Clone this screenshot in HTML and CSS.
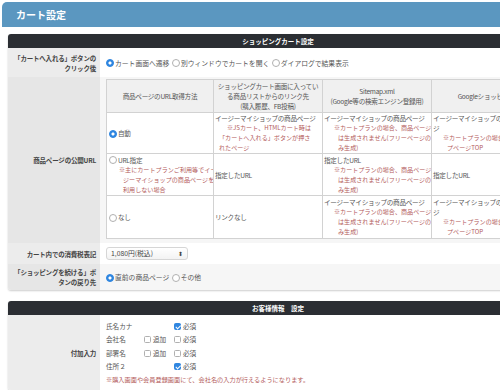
FILE: index.html
```html
<!DOCTYPE html>
<html lang="ja">
<head>
    <meta charset="UTF-8">
    <meta name="viewport" content="width=device-width, initial-scale=1.0">
    <title>カート設定</title>
    <link rel="stylesheet" href="styles.css">
</head>
<body>

    <div class="page">
        <!-- Page title -->
        <h1 class="page-title">カート設定</h1>

        <!-- Shopping cart settings -->
        <div class="panel">
            <table class="form-table">
                <thead>
                    <tr><th colspan="2" class="panel-head">ショッピングカート設定</th></tr>
                </thead>
                <tbody>
                    <tr class="row-click">
                        <th>「カートへ入れる」ボタンの<br>クリック後</th>
                        <td>
                            <label class="opt"><span class="radio on"></span>カート画面へ遷移</label>
                            <label class="opt"><span class="radio"></span>別ウィンドウでカートを開く</label>
                            <label class="opt"><span class="radio"></span>ダイアログで結果表示</label>
                        </td>
                    </tr>
                    <tr class="row-url alt">
                        <th>商品ページの公開URL</th>
                        <td>
                            <table class="url-table">
                                <colgroup>
                                    <col class="c1"><col class="c2"><col class="c3"><col class="c4">
                                </colgroup>
                                <tr class="h">
                                    <th>商品ページのURL取得方法</th>
                                    <th>ショッピングカート画面に入ってい<br>る商品リストからのリンク先<br>(購入履歴、FB投稿)</th>
                                    <th>Sitemap.xml<br>(Google等の検索エンジン登録用)</th>
                                    <th>Googleショッピング</th>
                                </tr>
                                <tr class="r1">
                                    <td><label class="opt"><span class="radio on"></span>自動</label></td>
                                    <td>イージーマイショップの商品ページ
                                        <div class="note note-c">※JSカート、HTMLカート時は<br>「カートへ入れる」ボタンが押さ<br>れたページ</div>
                                    </td>
                                    <td>イージーマイショップの商品ページ
                                        <div class="note">※カートプランの場合、商品ページ<br>は生成されません(フリーページの<br>み生成)</div>
                                    </td>
                                    <td>イージーマイショップの商品ペー<br>ジ
                                        <div class="note">※カートプランの場合、ショッ<br>プページTOP</div>
                                    </td>
                                </tr>
                                <tr class="r2">
                                    <td><label class="opt"><span class="radio"></span>URL指定</label>
                                        <div class="note">※主にカートプランご利用等でイー<br>ジーマイショップの商品ページを<br>利用しない場合</div>
                                    </td>
                                    <td>指定したURL</td>
                                    <td>指定したURL
                                        <div class="note">※カートプランの場合、商品ページ<br>は生成されません(フリーページの<br>み生成)</div>
                                    </td>
                                    <td>指定したURL</td>
                                </tr>
                                <tr class="r3">
                                    <td><label class="opt"><span class="radio"></span>なし</label></td>
                                    <td>リンクなし</td>
                                    <td>イージーマイショップの商品ページ
                                        <div class="note">※カートプランの場合、商品ページ<br>は生成されません(フリーページの<br>み生成)</div>
                                    </td>
                                    <td>イージーマイショップの商品ペー<br>ジ
                                        <div class="note">※カートプランの場合、ショッ<br>プページTOP</div>
                                    </td>
                                </tr>
                            </table>
                        </td>
                    </tr>
                    <tr class="row-tax">
                        <th>カート内での消費税表記</th>
                        <td>
                            <div class="select">1,080円(税込)<span class="arrows">&#x2B0D;</span></div>
                        </td>
                    </tr>
                    <tr class="row-back alt">
                        <th>「ショッピングを続ける」ボ<br>タンの戻り先</th>
                        <td>
                            <label class="opt"><span class="radio on"></span>直前の商品ページ</label>
                            <label class="opt"><span class="radio"></span>その他</label>
                        </td>
                    </tr>
                </tbody>
            </table>
        </div>

        <!-- Customer info settings -->
        <div class="panel panel-customer">
            <table class="form-table">
                <thead>
                    <tr><th colspan="2" class="panel-head">お客様情報　設定</th></tr>
                </thead>
                <tbody>
                    <tr class="row-extra">
                        <th>付加入力</th>
                        <td>
                            <div class="extra-grid">
                                <span>氏名カナ</span><span></span><span><span class="check on"></span>必須</span>
                                <span>会社名</span><span><span class="check"></span>追加</span><span><span class="check"></span>必須</span>
                                <span>部署名</span><span><span class="check"></span>追加</span><span><span class="check"></span>必須</span>
                                <span>住所２</span><span></span><span><span class="check on"></span>必須</span>
                            </div>
                            <div class="note extra-note">※購入画面や会員登録画面にて、会社名の入力が行えるようになります。</div>
                        </td>
                    </tr>
                </tbody>
            </table>
        </div>
    </div>

</body>
</html>
```

FILE: styles.css
```css
body {
    margin: 0;
    padding: 0;
    font-family: "Noto Sans CJK JP", "Noto Sans", sans-serif;
    color: #555;
    background: #fff;
    width: 500px;
    height: 390px;
    overflow: hidden;
}
.page {
    width: 560px;
    padding: 2px 0 0 2px;
}
.page-title {
    margin: 0;
    height: 25px;
    line-height: 25px;
    padding-left: 14px;
    background: #5b97c0;
    border-radius: 5px 0 0 0;
    color: #fff;
    font-size: 10px;
    font-weight: bold;
}
.panel {
    margin: 7px 0 0 6px;
    width: 540px;
    background: #fff;
    border-radius: 3px;
    box-shadow: 0 1px 2px rgba(0, 0, 0, 0.2);
    overflow: hidden;
}
.panel-customer {
    margin-top: 11px;
}
.form-table {
    width: 100%;
    border-collapse: collapse;
}
.form-table > thead > tr > .panel-head {
    height: 14px;
    padding: 0;
    background: #2b2e33;
    color: #fff;
    font-size: 6.5px;
    font-weight: bold;
    text-align: center;
}
.form-table > tbody > tr > th {
    width: 88px;
    padding: 0 4px 0 0;
    background: #ececec;
    color: #444;
    font-size: 6.5px;
    font-weight: bold;
    line-height: 10px;
    letter-spacing: -0.2px;
    text-align: right;
    vertical-align: middle;
}
.form-table > tbody > tr > td {
    padding: 0 0 0 6px;
    font-size: 6.8px;
    vertical-align: middle;
}
.form-table > tbody > tr.alt > td {
    background: #f6f6f6;
}
.form-table > tbody > tr.alt > th {
    background: #e6e6e6;
}
.row-click { height: 29px; }
.row-url > td { padding: 2px 0 4px 6px !important; }
.row-tax { height: 21px; }
.row-back { height: 26px; }
.opt {
    margin-right: 1px;
    white-space: nowrap;
}
.radio {
    display: inline-block;
    width: 8px;
    height: 8px;
    margin-right: 1px;
    border: 1px solid #b0b0b0;
    border-radius: 50%;
    background: #fff;
    box-sizing: border-box;
    vertical-align: -1.5px;
}
.radio.on {
    border-color: #2f86e0;
    background: radial-gradient(circle, #fff 0 1.3px, #2f86e0 1.8px);
}
/* url table */
.url-table {
    width: 435px;
    border-collapse: collapse;
    table-layout: fixed;
    background: #fff;
    font-size: 6.6px;
    line-height: 10px;
    letter-spacing: -0.3px;
}
.url-table .c1 { width: 107px; }
.url-table .c2 { width: 109px; }
.url-table .c3 { width: 109px; }
.url-table .c4 { width: 110px; }
.url-table th,
.url-table td {
    border: 1px solid #d2d2d2;
    padding: 0 1px;
    white-space: nowrap;
    vertical-align: middle;
    overflow: hidden;
}
.url-table th {
    background: #f0f0f0;
    font-weight: normal;
    text-align: center;
}
.url-table tr.h { height: 33px; }
.url-table tr.r1 { height: 41px; }
.url-table tr.r2 { height: 42px; }
.url-table tr.r3 { height: 43px; }
.url-table tr > td:first-child {
    padding-left: 2px;
}
.note {
    color: #b35b5b;
    font-size: 6.1px;
    letter-spacing: 0;
    padding-left: 14px;
    text-indent: -4px;
}
.note-c {
    padding-left: 4px;
    text-indent: 8px;
}
/* select */
.select {
    position: relative;
    width: 76px;
    height: 11px;
    line-height: 11px;
    padding-left: 4px;
    border: 1px solid #d6d6d6;
    border-radius: 3px;
    background: linear-gradient(#fff, #f3f3f3);
    color: #444;
    font-size: 6.8px;
}
.arrows {
    position: absolute;
    right: 4px;
    top: 0;
    font-size: 6px;
    color: #444;
}
/* extra inputs */
.row-extra { height: 72px; }
.extra-grid {
    display: grid;
    grid-template-columns: 38px 30px auto;
    grid-auto-rows: 13.5px;
    align-items: center;
    font-size: 6.6px;
    padding-top: 4px;
}
.check {
    display: inline-block;
    width: 7px;
    height: 7px;
    margin-right: 2px;
    border: 1px solid #b0b0b0;
    border-radius: 1.5px;
    background: #fff;
    box-sizing: border-box;
    vertical-align: -1px;
    position: relative;
}
.check.on {
    border-color: #2f86e0;
    background: #2f86e0;
}
.check.on::after {
    content: "";
    position: absolute;
    left: 1.5px;
    top: 0;
    width: 1.5px;
    height: 3.5px;
    border: solid #fff;
    border-width: 0 1px 1px 0;
    transform: rotate(45deg);
}
.extra-note {
    padding: 0 0 4px 0;
    text-indent: 0;
    font-size: 6.2px;
    line-height: 13px;
}
```
